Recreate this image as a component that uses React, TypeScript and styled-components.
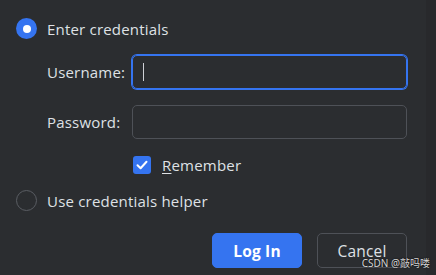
import React from "react";
import styled, { createGlobalStyle } from "styled-components";

const Global = createGlobalStyle`
  html, body { margin: 0; padding: 0; background: #2b2d30; }
  body { font-family: "Open Sans", "Noto Sans", sans-serif; }
  * { box-sizing: border-box; }
`;

const Page = styled.div`
  position: relative;
  display: flex;
  width: 436px;
  height: 275px;
  background: #2b2d30;
  overflow: hidden;
`;

const Main = styled.div`
  flex: 1;
  display: flex;
  flex-direction: column;
  padding: 18px 19px 0 16px;
  color: #dfe1e5;
  font-size: 15px;
  letter-spacing: 0.2px;
`;

const Strip = styled.div`
  width: 10px;
  background: #28292c;
`;

const OptionRow = styled.div<{ $mt?: number }>`
  display: flex;
  align-items: center;
  height: 21px;
  margin-top: ${(p) => p.$mt ?? 0}px;
  gap: 10px;
`;

const Radio = styled.span<{ $checked?: boolean }>`
  width: 21px;
  height: 21px;
  border-radius: 50%;
  display: flex;
  align-items: center;
  justify-content: center;
  background: ${(p) => (p.$checked ? "#3574f0" : "transparent")};
  border: ${(p) => (p.$checked ? "none" : "1.5px solid #5a5d63")};
  &::after {
    content: "";
    display: ${(p) => (p.$checked ? "block" : "none")};
    width: 8px;
    height: 8px;
    border-radius: 50%;
    background: #ffffff;
  }
`;

const Fields = styled.div`
  display: grid;
  grid-template-columns: 85px 1fr;
  row-gap: 16px;
  margin-top: 16px;
  padding-left: 31px;
  align-items: center;
`;

const Label = styled.span`
  color: #dfe1e5;
`;

const Field = styled.div<{ $focused?: boolean }>`
  height: 34px;
  border-radius: 5px;
  border: 1px solid ${(p) => (p.$focused ? "#3574f0" : "#4e5157")};
  box-shadow: ${(p) => (p.$focused ? "0 0 0 1px #3574f0" : "none")};
  display: flex;
  align-items: center;
  padding-left: 10px;
`;

const Caret = styled.span`
  width: 1px;
  height: 18px;
  background: #ced0d6;
`;

const CheckRow = styled.div`
  display: flex;
  align-items: center;
  margin-top: 17px;
  padding-left: 117px;
  height: 18px;
  gap: 11px;
`;

const Checkbox = styled.span`
  width: 18px;
  height: 18px;
  border-radius: 3px;
  background: #3574f0;
  display: flex;
  align-items: center;
  justify-content: center;
`;

const Mnemonic = styled.span`
  text-decoration: underline;
  text-underline-offset: 2px;
`;

const Buttons = styled.div`
  display: flex;
  justify-content: flex-end;
  gap: 15px;
  margin-top: 22px;
`;

const Button = styled.button<{ $primary?: boolean }>`
  width: 90px;
  height: 35px;
  border-radius: 5px;
  font-family: inherit;
  font-size: 15.5px;
  letter-spacing: 0.2px;
  font-weight: ${(p) => (p.$primary ? 700 : 400)};
  color: ${(p) => (p.$primary ? "#ffffff" : "#dfe1e5")};
  background: ${(p) => (p.$primary ? "#3574f0" : "transparent")};
  border: 1px solid ${(p) => (p.$primary ? "#3574f0" : "#4e5157")};
  padding: 0;
`;

const Watermark = styled.div`
  position: absolute;
  right: 6px;
  bottom: 6px;
  font-family: "Noto Sans", "Noto Sans CJK SC", sans-serif;
  font-size: 10px;
  line-height: 12px;
  color: #d4d4d4;
  text-shadow: 0 0 2px #000;
`;

export default function App() {
  return (
    <>
      <Global />
      <Page>
        <Main>
          <OptionRow>
            <Radio $checked />
            <span>Enter credentials</span>
          </OptionRow>
          <Fields>
            <Label>Username:</Label>
            <Field $focused>
              <Caret />
            </Field>
            <Label>Password:</Label>
            <Field />
          </Fields>
          <CheckRow>
            <Checkbox>
              <svg width="14" height="14" viewBox="0 0 14 14">
                <path d="M2.5 7.2 L5.6 10.2 L11.5 3.8" fill="none" stroke="#fff" strokeWidth="2" strokeLinecap="round" strokeLinejoin="round" />
              </svg>
            </Checkbox>
            <span>
              <Mnemonic>R</Mnemonic>emember
            </span>
          </CheckRow>
          <OptionRow $mt={16}>
            <Radio />
            <span>Use credentials helper</span>
          </OptionRow>
          <Buttons>
            <Button $primary>Log In</Button>
            <Button>Cancel</Button>
          </Buttons>
        </Main>
        <Strip />
        <Watermark>CSDN @敲吗喽</Watermark>
      </Page>
    </>
  );
}
